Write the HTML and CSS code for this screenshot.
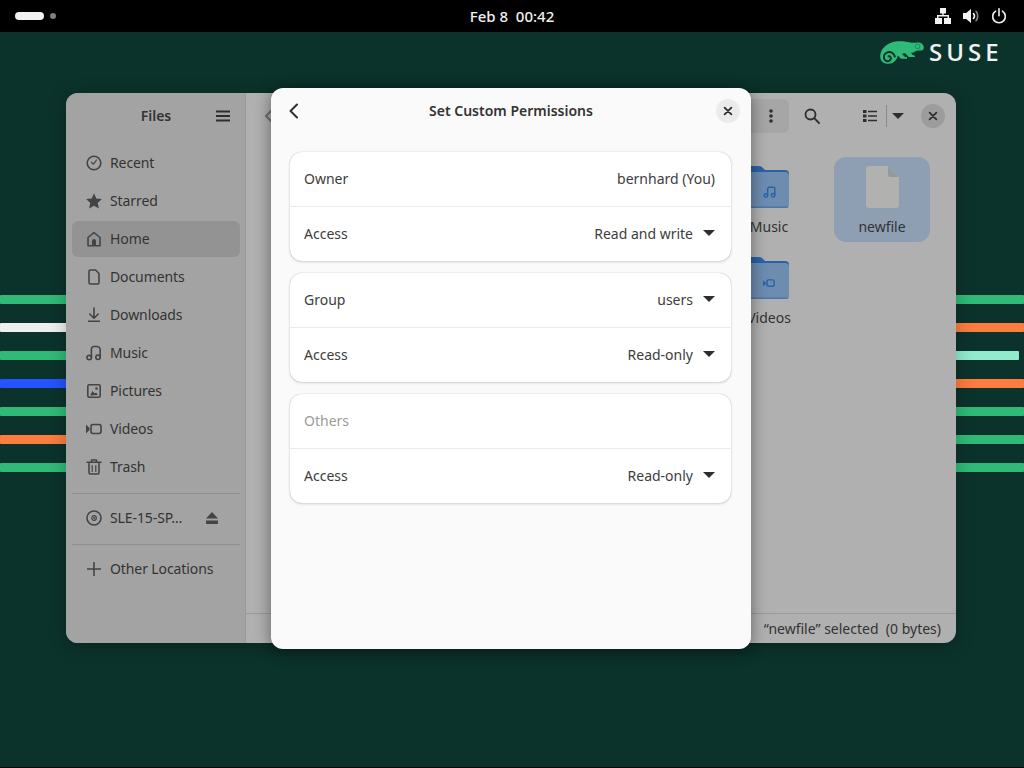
FILE: index.html
```html
<!DOCTYPE html>
<html lang="en">
<head>
  <meta charset="UTF-8">
  <title>Set Custom Permissions</title>
  <link rel="stylesheet" href="styles.css">
</head>
<body>
  <div class="topbar">
    <div class="workspaces"><span class="ws-pill"></span><span class="ws-dot"></span></div>
    <div class="clock">Feb 8&nbsp; 00:42</div>
    <div class="tray">
      <svg class="tray-icon" viewBox="0 0 16 16"><path d="M5 0h6v5.500H8.700v1.600H14V10h2v6H9v-6h3.500V8.600h-9V10H7v6H0v-6h2V7.100h5.300V5.500H5z"/></svg>
      <svg class="tray-icon" viewBox="0 0 16 16"><path d="M0 5h3.200L8 1v14l-4.800-4H0z"/><path class="tray-line" d="M10.500 5.500c1.100 1.400 1.100 3.600 0 5"/><path class="tray-line dim" d="M13 3.300c2.300 2.500 2.300 6.900 0 9.400"/></svg>
      <svg class="tray-icon" viewBox="0 0 16 16"><path class="tray-line" d="M4.600 3.200a6.300 6.300 0 1 0 6.800 0"/><path class="tray-line" d="M8 .8v7"/></svg>
    </div>
  </div>

  <div class="desktop">
    <div class="stripes">
      <div class="stripe-row"><span class="green"></span><span class="green"></span></div>
      <div class="stripe-row"><span class="white"></span><span class="orange"></span></div>
      <div class="stripe-row"><span class="green"></span><span class="mint"></span></div>
      <div class="stripe-row"><span class="blue"></span><span class="orange"></span></div>
      <div class="stripe-row"><span class="green"></span><span class="green"></span></div>
      <div class="stripe-row"><span class="orange"></span><span class="green"></span></div>
      <div class="stripe-row"><span class="green"></span><span class="green"></span></div>
    </div>

    <div class="suse-logo">
      <svg class="chameleon" viewBox="0 0 44 24"><path d="M.2 15C.6 8 7 1.800 15.500.6c6-.8 11 0 15 1 3 .7 5.500-.4 8.500 0 2.600.4 4.500 2 4.700 4.400.1 1.200-.2 2.300-.8 3.300l-6.400.4c-1.700 1.300-3.700 2-5.600 2.100l1.700 2.300 2.200.3.200 1.700-6.200-.2-3.500-3.600-3.300.4 2.600 3 2.300.3.100 1.700-6 0-3.300-3.200c-.5 4.500-4.300 8.300-8.900 8.300C3.900 23.200-.1 19.800.2 15z"/><path class="curl" d="M14.800 15.500c-1-3.300-3.900-5-6.900-4.300-2.900.7-4.500 3.300-3.900 5.900.5 2.200 2.600 3.500 4.600 3 1.600-.4 2.600-1.900 2.200-3.400-.3-1-1.300-1.600-2.300-1.400"/><circle class="eye" cx="37.500" cy="5.500" r="2.300"/></svg>
      <span class="suse-text">SUSE</span>
    </div>

    <div class="files-window">
      <aside class="sidebar">
        <div class="sidebar-head">
          <span class="sidebar-title">Files</span>
          <svg class="menu-icon" viewBox="0 0 16 16"><path d="M1 2.500h14v2H1zM1 7h14v2H1zM1 11.500h14v2H1z"/></svg>
        </div>
        <ul class="places">
          <li><svg class="ic" viewBox="0 0 16 16"><circle class="ln" cx="8" cy="8" r="6.800"/><path class="ln thin" d="M5.500 7.500 7.500 9.200 10.500 5"/></svg>Recent</li>
          <li><svg class="ic" viewBox="0 0 16 16"><path d="M8 .3l2.300 5.200 5.600.6-4.200 3.800 1.200 5.600L8 12.700l-4.900 2.800 1.200-5.600L.1 6.100l5.600-.6z"/></svg>Starred</li>
          <li class="active"><svg class="ic" viewBox="0 0 16 16"><path class="ln" d="M2 14.800V6.500L8 1.500l6 5v8.300z"/><path d="M6 15V10a2 2 0 0 1 4 0v5z"/></svg>Home</li>
          <li><svg class="ic" viewBox="0 0 16 16"><path class="ln" d="M3 2.500a1.500 1.500 0 0 1 1.500-1.500H9.500L13 4.500v9a1.500 1.500 0 0 1-1.500 1.500h-7A1.500 1.500 0 0 1 3 13.500z"/></svg>Documents</li>
          <li><svg class="ic" viewBox="0 0 16 16"><path class="ln" d="M8 1v10M3.800 7 8 11.200 12.200 7"/><path d="M2 13.500h12V15H2z"/></svg>Downloads</li>
          <li><svg class="ic" viewBox="0 0 16 16"><circle class="ln" cx="3.200" cy="12.600" r="2.200"/><circle class="ln" cx="12" cy="12.300" r="2.200"/><path class="ln" d="M5.400 12.600V4a2.500 2.500 0 0 1 2.500-2.500h3A3.300 3.300 0 0 1 14.200 4.800v7.500"/></svg>Music</li>
          <li><svg class="ic" viewBox="0 0 16 16"><rect class="ln" x="1.800" y="1.800" width="12.400" height="12.400" rx="1.500"/><circle cx="10.500" cy="5.500" r="1.300"/><path d="M4 12.500 6.500 8l2.200 2.500 1.300-1 2 2.500z"/></svg>Pictures</li>
          <li><svg class="ic" viewBox="0 0 16 16"><rect class="ln" x="5" y="3.500" width="10" height="9" rx="2"/><path d="M0 3.500 3.500 7V9L0 12.500z"/></svg>Videos</li>
          <li><svg class="ic" viewBox="0 0 16 16"><path class="ln" d="M3 4.500v9A1.500 1.500 0 0 0 4.500 15h7a1.500 1.500 0 0 0 1.500-1.500v-9M1 3.300h14M5.500 3V1h5v2"/><path class="ln thin" d="M6.200 6.500v6M9.800 6.500v6"/></svg>Trash</li>
        </ul>
        <div class="sep"></div>
        <ul class="places">
          <li>
            <svg class="ic" viewBox="0 0 16 16"><circle class="ln" cx="8" cy="8" r="7"/><circle class="ln thin" cx="8" cy="8" r="2.300"/><circle cx="8" cy="8" r="1"/></svg>
            <span class="place-name">SLE-15-SP…</span>
            <svg class="ic eject" viewBox="0 0 16 16"><path d="M8 2l6 6.500H2zM2 10.500h12V14H2z"/></svg>
          </li>
        </ul>
        <div class="sep"></div>
        <ul class="places">
          <li><svg class="ic" viewBox="0 0 16 16"><path d="M7.200 1h1.600v6.200H15v1.600H8.800V15H7.200V8.800H1V7.200h6.200z"/></svg>Other Locations</li>
        </ul>
      </aside>

      <section class="content">
        <div class="toolbar">
          <svg class="back-ghost" viewBox="0 0 16 16"><path d="M10 2 4 8l6 6"/></svg>
          <div class="path-bar">
            <svg class="tb-icon" viewBox="0 0 16 16"><circle cx="8" cy="3" r="1.800"/><circle cx="8" cy="8" r="1.800"/><circle cx="8" cy="13" r="1.800"/></svg>
          </div>
          <svg class="tb-icon search" viewBox="0 0 16 16"><circle class="ln-dark" cx="6.500" cy="6.500" r="5"/><path class="ln-dark" d="M10.200 10.200 15 15"/></svg>
          <svg class="tb-icon list" viewBox="0 0 16 16"><path d="M1 2h3.500v3H1zM6 2.700h9v1.600H6zM1 6.500h3.500v3H1zM6 7.200h9v1.600H6zM1 11h3.500v3H1zM6 11.700h9v1.600H6z"/></svg>
          <span class="tb-divider"></span>
          <span class="caret tb-caret"></span>
          <span class="win-close"><svg viewBox="0 0 16 16"><path class="x" d="M3.500 3.500l9 9M12.500 3.500l-9 9"/></svg></span>
        </div>
        <div class="file-grid">
          <div class="tile">
            <svg class="folder" viewBox="0 0 40 42"><path class="folder-back" d="M-30 0h40a6 6 0 0 1 4 2l2 2h20a4 4 0 0 1 4 4v8H-30z"/><path class="folder-front" d="M-30 6h66a4 4 0 0 1 4 4V38a4 4 0 0 1-4 4h-66z"/><path class="folder-edge" d="M-30 40.500h70a4 4 0 0 1-4 1.500h-66z"/><g transform="translate(14.500 20) scale(.8)"><circle class="f-ln" cx="3" cy="12" r="2.200"/><circle class="f-ln" cx="12" cy="11.500" r="2.200"/><path class="f-ln" d="M5.200 12V3.500a2 2 0 0 1 2-2h5a2 2 0 0 1 2 2v8"/></g></svg>
            <span class="tile-name">Music</span>
          </div>
          <div class="tile selected">
            <svg class="doc" viewBox="0 0 33 42"><path class="doc-page" d="M3 0h19l11 11v28a3 3 0 0 1-3 3H3a3 3 0 0 1-3-3V3a3 3 0 0 1 3-3z"/><path class="doc-fold" d="M22 0l11 11H24a2 2 0 0 1-2-2z"/></svg>
            <span class="tile-name">newfile</span>
          </div>
          <div class="tile">
            <svg class="folder" viewBox="0 0 40 42"><path class="folder-back" d="M-30 0h40a6 6 0 0 1 4 2l2 2h20a4 4 0 0 1 4 4v8H-30z"/><path class="folder-front" d="M-30 6h66a4 4 0 0 1 4 4V38a4 4 0 0 1-4 4h-66z"/><path class="folder-edge" d="M-30 40.500h70a4 4 0 0 1-4 1.500h-66z"/><g transform="translate(14 20.500) scale(.8)"><rect class="f-ln" x="5" y="3" width="9" height="8" rx="2"/><path class="f-fill" d="M0 3.500l3.500 3v1.500L0 11z"/></g></svg>
            <span class="tile-name">Videos</span>
          </div>
        </div>
        <div class="statusbar">“newfile” selected&nbsp; (0 bytes)</div>
      </section>
    </div>

    <div class="dialog">
      <div class="dialog-head">
        <svg class="dialog-back" viewBox="0 0 16 16"><path d="M11 1.500 4.500 8l6.500 6.500"/></svg>
        <span class="dialog-title">Set Custom Permissions</span>
        <span class="dialog-close"><svg viewBox="0 0 16 16"><path class="x" d="M3.500 3.500l9 9M12.500 3.500l-9 9"/></svg></span>
      </div>
      <div class="dialog-body">
        <div class="card">
          <div class="row"><span>Owner</span><span class="value">bernhard (You)</span></div>
          <div class="row"><span>Access</span><span class="value">Read and write<span class="caret"></span></span></div>
        </div>
        <div class="card">
          <div class="row"><span>Group</span><span class="value">users<span class="caret"></span></span></div>
          <div class="row"><span>Access</span><span class="value">Read-only<span class="caret"></span></span></div>
        </div>
        <div class="card">
          <div class="row"><span class="muted">Others</span></div>
          <div class="row"><span>Access</span><span class="value">Read-only<span class="caret"></span></span></div>
        </div>
      </div>
    </div>
  </div>
</body>
</html>
```

FILE: styles.css
```css
* {
  box-sizing: border-box;
}
html, body {
  margin: 0;
  padding: 0;
  height: 768px;
  overflow: hidden;
}
body {
  font-family: "Noto Sans", sans-serif;
  font-size: 14px;
  background-color: #0c322c;
  color: #333;
  border-bottom: 1px solid #000;
}
ul {
  list-style: none;
  margin: 0;
  padding: 0;
}

/* top bar */
.topbar {
  height: 32px;
  background: #000;
  color: #fff;
  display: flex;
  align-items: center;
  justify-content: space-between;
  padding: 0 17px 0 15px;
  position: relative;
}
.workspaces {
  display: flex;
  align-items: center;
  gap: 6px;
}
.ws-pill {
  width: 29px;
  height: 8px;
  border-radius: 4px;
  background: #f2f2f2;
}
.ws-dot {
  width: 6px;
  height: 6px;
  border-radius: 50%;
  background: #808080;
}
.clock {
  position: absolute;
  left: 0;
  right: 0;
  text-align: center;
  font-size: 15px;
  font-weight: 500;
  color: #f0f0f0;
}
.tray {
  display: flex;
  gap: 12px;
}
.tray-icon {
  width: 16px;
  height: 16px;
  fill: #f2f2f2;
}
.tray-line {
  fill: none;
  stroke: #f2f2f2;
  stroke-width: 1.6;
  stroke-linecap: round;
}
.tray-line.dim {
  stroke: #888;
}

/* wallpaper */
.desktop {
  position: relative;
  height: 735px;
}
.stripes {
  position: absolute;
  left: 0;
  right: 0;
  top: 263px;
  display: flex;
  flex-direction: column;
  gap: 19px;
}
.stripe-row {
  display: flex;
  justify-content: space-between;
  height: 9px;
}
.stripe-row span {
  width: 70px;
  border-radius: 1px;
}
.green {
  background: #30ba78;
}
.white {
  background: #efefef;
}
.orange {
  background: #fe7c3f;
}
.blue {
  background: #2453ff;
}
.stripe-row .mint {
  background: #90ebcd;
  width: 65px;
  margin-right: 5px;
}
.suse-logo {
  position: absolute;
  top: 8px;
  left: 880px;
  display: flex;
  align-items: center;
  gap: 5px;
}
.chameleon {
  width: 44px;
  height: 24px;
  fill: #30ba78;
}
.chameleon .curl {
  fill: none;
  stroke: #0c322c;
  stroke-width: 2;
  stroke-linecap: round;
}
.chameleon .eye {
  fill: none;
  stroke: #1f8a5a;
  stroke-width: 1;
}
.suse-text {
  font-family: "Open Sans", sans-serif;
  font-size: 24px;
  font-weight: 600;
  line-height: 24px;
  letter-spacing: 4px;
  margin-bottom: 2px;
  color: #eef2f1;
}

/* files window, dimmed behind the dialog */
.files-window {
  position: absolute;
  left: 66px;
  top: 61px;
  width: 890px;
  height: 550px;
  display: flex;
  border-radius: 12px;
  overflow: hidden;
  background: #b0b0b0;
  box-shadow: 0 3px 18px rgba(0, 0, 0, 0.25);
}
.sidebar {
  width: 180px;
  background: #a3a3a3;
  border-right: 1px solid #999;
  padding: 0 5px 0 6px;
  flex-shrink: 0;
  color: #333;
}
.sidebar-head {
  height: 44px;
  display: flex;
  align-items: center;
  justify-content: center;
  position: relative;
  margin-bottom: 8px;
}
.sidebar-title {
  font-weight: 600;
  margin-top: 1px;
}
.menu-icon {
  position: absolute;
  right: 9px;
  top: 15px;
  width: 16px;
  height: 16px;
  fill: #2e2e2e;
}
.places {
  display: flex;
  flex-direction: column;
  gap: 2px;
  letter-spacing: -0.1px;
}
.places li {
  height: 36px;
  display: flex;
  align-items: center;
  gap: 8px;
  padding: 0 14px 1px;
  border-radius: 6px;
}
.places li.active {
  background: #939393;
}
.place-name {
  flex: 1;
}
.ic {
  width: 16px;
  height: 16px;
  fill: #444;
  flex-shrink: 0;
}
.eject {
  margin-right: 6px;
}
.ln {
  fill: none;
  stroke: #444;
  stroke-width: 1.6;
  stroke-linecap: round;
  stroke-linejoin: round;
}
.ln.thin {
  stroke-width: 1.2;
}
.sep {
  height: 1px;
  background: #8f8f8f;
  margin: 8px 0 6px;
}

.content {
  flex: 1;
  display: flex;
  flex-direction: column;
  min-width: 0;
}
.toolbar {
  height: 46px;
  display: flex;
  align-items: center;
  padding: 0 11px 0 16px;
  position: relative;
}
.back-ghost {
  width: 16px;
  height: 16px;
  fill: none;
  stroke: #6e6e6e;
  stroke-width: 2;
}
.path-bar {
  width: 134px;
  height: 34px;
  margin-left: auto;
  margin-right: 15px;
  border-radius: 6px;
  background: #a6a6a6;
  display: flex;
  align-items: center;
  justify-content: flex-end;
  padding-right: 10px;
}
.tb-icon {
  width: 16px;
  height: 16px;
  fill: #2e2e2e;
  flex-shrink: 0;
}
.ln-dark {
  fill: none;
  stroke: #2e2e2e;
  stroke-width: 1.8;
  stroke-linecap: round;
}
.search {
  margin-right: 42px;
}
.tb-divider {
  width: 1px;
  height: 22px;
  background: #8a8a8a;
  margin: 0 5px 0 8px;
}
.caret {
  display: inline-block;
  width: 0;
  height: 0;
  border-left: 6px solid transparent;
  border-right: 6px solid transparent;
  border-top: 6px solid #2e2e2e;
  flex-shrink: 0;
}
.win-close {
  width: 24px;
  height: 24px;
  margin-left: 17px;
  border-radius: 50%;
  background: #9c9c9c;
  display: flex;
  align-items: center;
  justify-content: center;
}
.win-close svg,
.dialog-close svg {
  width: 12px;
  height: 12px;
}
.x {
  fill: none;
  stroke: #2e2e2e;
  stroke-width: 2.4;
  stroke-linecap: round;
}
.file-grid {
  flex: 1;
  display: grid;
  grid-template-columns: 96px 96px;
  grid-auto-rows: 85px;
  column-gap: 17px;
  row-gap: 6px;
  justify-content: end;
  align-content: start;
  padding: 18px 26px 0 0;
}
.tile {
  display: flex;
  flex-direction: column;
  align-items: center;
  padding-top: 9px;
  border-radius: 12px;
  position: relative;
  overflow: hidden;
}
.tile.selected {
  background: #8e9fb4;
}
.folder {
  width: 40px;
  height: 42px;
  overflow: visible;
}
.folder-back {
  fill: #2a62a8;
}
.folder-front {
  fill: #6d8cb0;
}
.folder-edge {
  fill: #4f75a6;
}
.f-ln {
  fill: none;
  stroke: #2a62a8;
  stroke-width: 1.8;
}
.f-fill {
  fill: #2a62a8;
}
.doc {
  width: 33px;
  height: 42px;
}
.doc-page {
  fill: #b1b1af;
}
.doc-fold {
  fill: #929aa1;
}
.tile-name {
  margin-top: 9px;
  line-height: 19px;
  color: #333;
}
.statusbar {
  height: 30px;
  border-top: 1px solid #9c9c9c;
  display: flex;
  align-items: center;
  justify-content: flex-end;
  padding-right: 15px;
  color: #333;
}

/* dialog */
.dialog {
  position: absolute;
  left: 271px;
  top: 56px;
  width: 480px;
  height: 561px;
  border-radius: 12px;
  background: #fafafa;
  box-shadow: 0 2px 16px rgba(0, 0, 0, 0.45);
  display: flex;
  flex-direction: column;
}
.dialog-head {
  height: 46px;
  display: flex;
  align-items: center;
  justify-content: center;
  position: relative;
}
.dialog-title {
  font-weight: 600;
  margin-bottom: 1px;
}
.dialog-back {
  position: absolute;
  left: 15px;
  top: 15px;
  width: 16px;
  height: 16px;
  fill: none;
  stroke: #2e2e2e;
  stroke-width: 2;
  stroke-linecap: round;
  stroke-linejoin: round;
}
.dialog-close {
  position: absolute;
  right: 11px;
  top: 11px;
  width: 24px;
  height: 24px;
  border-radius: 50%;
  background: #ebebeb;
  display: flex;
  align-items: center;
  justify-content: center;
}
.dialog-body {
  padding: 18px 20px 0 19px;
  display: flex;
  flex-direction: column;
  gap: 12px;
}
.card {
  background: #fff;
  border-radius: 12px;
  box-shadow: 0 0 1px rgba(0, 0, 0, 0.3), 0 1px 3px rgba(0, 0, 0, 0.15);
}
.row {
  height: 54px;
  display: flex;
  align-items: center;
  justify-content: space-between;
  padding: 0 16px 2px 14px;
  color: #3d3d3d;
}
.row + .row {
  height: 55px;
  border-top: 1px solid #ebebeb;
}
.value {
  display: flex;
  align-items: center;
  gap: 10px;
}
.muted {
  color: #9a9a9a;
}
```
